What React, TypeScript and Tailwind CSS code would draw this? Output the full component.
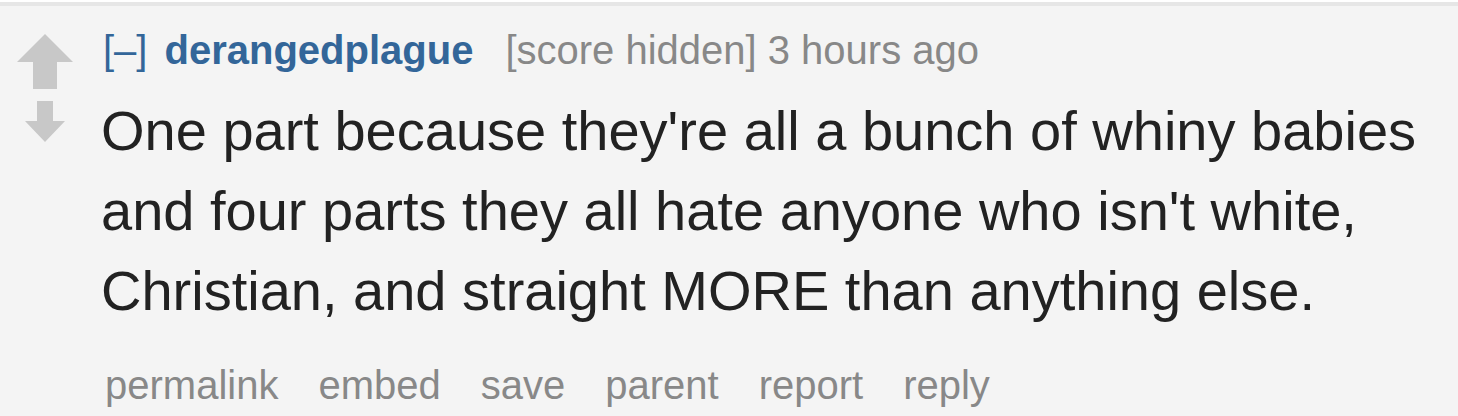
const UpArrow = () => (
  <svg width="56" height="55" viewBox="0 0 56 55" fill="#c8c8c8">
    <path d="M28 0 L56 28 L40 28 L40 55 L16 55 L16 28 L0 28 Z" />
  </svg>
);

const DownArrow = () => (
  <svg width="40" height="41" viewBox="0 0 40 41" fill="#c8c8c8">
    <path d="M12 0 L28 0 L28 20 L40 20 L20 41 L0 20 L12 20 Z" />
  </svg>
);

const buttons = ['permalink', 'embed', 'save', 'parent', 'report', 'reply'];

export default function App() {
  return (
    <div
      className="w-full h-[416px] bg-white pt-[2px] overflow-hidden"
      style={{ fontFamily: '"Liberation Sans", Arial, sans-serif' }}
    >
      <div className="h-full border-t-4 border-[#e6e6e6] bg-[#f4f4f4] flex">
        <div className="w-[101px] shrink-0 flex flex-col pl-[17px] pt-[28px]">
          <UpArrow />
          <div className="ml-[8px] mt-[12px]">
            <DownArrow />
          </div>
        </div>

        <div className="flex flex-col pt-[20px]">
          <p className="flex items-baseline text-[40px] leading-[48px] pl-[2px] whitespace-nowrap">
            <span className="text-[#336699]">[–]</span>
            <span className="ml-[17px] font-bold text-[#336699]">derangedplague</span>
            <span className="ml-[32px] text-[#888888]">[score hidden]</span>
            <span className="ml-[11px] text-[#888888]">3 hours ago</span>
          </p>

          <div className="mt-[17px] text-[56px] leading-[80px] text-[#222222]">
            <p>One part because they're all a bunch of whiny babies</p>
            <p>and four parts they all hate anyone who isn't white,</p>
            <p>Christian, and straight MORE than anything else.</p>
          </div>

          <ul className="mt-[30px] flex gap-[40px] pl-[4px] text-[40px] leading-[48px] text-[#888888]">
            {buttons.map((b) => (
              <li key={b}>{b}</li>
            ))}
          </ul>
        </div>
      </div>
    </div>
  );
}
